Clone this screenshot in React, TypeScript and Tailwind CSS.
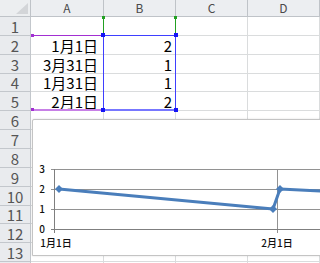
import React from "react";

const rowHeights = [19, 19, 19, 18, 19, 19, 19, 19, 19, 19, 18, 19, 19, 19];
const cols = ["A", "B", "C", "D", ""];
const colW = ["w-[73px]", "w-[72px]", "w-[72px]", "w-[72px]", "w-[72px]"];
const rowH: Record<number, string> = { 18: "h-[18px]", 19: "h-[19px]" };

const dataA: Record<number, string> = { 2: "1月1日", 3: "3月31日", 4: "1月31日", 5: "2月1日" };
const dataB: Record<number, string> = { 2: "2", 3: "1", 4: "1", 5: "2" };

function Diamond({ x, y }: { x: number; y: number }) {
  const s = 4;
  return <polygon points={`${x},${y - s} ${x + s},${y} ${x},${y + s} ${x - s},${y}`} fill="#4a7ebb" />;
}

export default function App() {
  const font = "font-['Noto_Sans_CJK_JP',sans-serif]";
  return (
    <div className={`relative w-[320px] h-[263px] overflow-hidden bg-white ${font}`}>
      {/* header row */}
      <div className="flex h-[17px]">
        <div className="relative w-[31px] shrink-0 h-full bg-[#eceef0] border-r border-b border-[#bfc3c8]">
          <svg className="absolute inset-0" width="30" height="16">
            <polygon points="16,14 28,14 28,3" fill="#d3d5d8" />
          </svg>
        </div>
        {cols.map((c, i) => (
          <div
            key={i}
            className={`${colW[i]} shrink-0 h-full bg-[#eceef1] border-r border-b border-[#bfc3c8] flex items-center justify-center text-[12px] leading-none text-[#4a4a4a]`}
          >
            {c}
          </div>
        ))}
      </div>
      {/* body rows */}
      {rowHeights.map((h, idx) => {
        const r = idx + 1;
        return (
          <div key={r} className={`flex ${rowH[h]}`}>
            <div className="w-[31px] shrink-0 h-full bg-[#e9ebee] border-r border-b border-[#c3c7cc] flex items-center justify-center text-[15px] leading-none text-[#555]">
              {r <= 13 ? r : ""}
            </div>
            {cols.map((c, i) => (
              <div
                key={i}
                className={`${colW[i]} shrink-0 h-full border-r border-b border-[#dadcdd] flex items-end justify-end pb-px text-[15px] leading-[15px] text-black ${
                  i === 0 ? "pr-[5px]" : "pr-[3px]"
                }`}
              >
                {i === 0 ? dataA[r] ?? "" : i === 1 ? dataB[r] ?? "" : ""}
              </div>
            ))}
          </div>
        );
      })}

      {/* series name highlight (green) */}
      <div className="absolute left-[103px] top-[17px] w-[73px] h-[18px] border-l border-r border-l-[#22a022] border-r-[#22a022]">
        <div className="absolute -left-[2px] -top-px w-[3px] h-[3px] bg-[#22a022]" />
        <div className="absolute -right-[2px] -top-px w-[3px] h-[3px] bg-[#22a022]" />
      </div>

      {/* category highlight (purple) */}
      <div className="absolute left-[31px] top-[35px] w-[72px] h-[76px] border-t border-b-2 border-t-[#a22fd2] border-b-[#c780e6]">
        <div className="absolute left-0 -top-[2px] w-[3px] h-[3px] bg-[#a22fd2]" />
        <div className="absolute left-0 -bottom-[2px] w-[3px] h-[3px] bg-[#a22fd2]" />
      </div>

      {/* values highlight (blue) */}
      <div className="absolute left-[103px] top-[35px] w-[73px] h-[76px] border-l border-r border-t border-b-2 border-l-[#3f3fff] border-r-[#3f3fff] border-t-[#3f3fff] border-b-[#7777ff]">
        <div className="absolute -left-[3px] -top-[3px] w-[4px] h-[4px] bg-[#1515f5]" />
        <div className="absolute -right-[3px] -top-[3px] w-[4px] h-[4px] bg-[#1515f5]" />
        <div className="absolute -left-[3px] -bottom-[3px] w-[4px] h-[4px] bg-[#1515f5]" />
        <div className="absolute -right-[3px] -bottom-[3px] w-[4px] h-[4px] bg-[#1515f5]" />
      </div>

      {/* chart */}
      <div className="absolute left-[32px] top-[119px] w-[300px] h-[137px] bg-white border border-[#c4c4c4] rounded-tl-[2px] shadow-[0_0_2px_rgba(0,0,0,0.15)]">
        <svg className="absolute left-0 top-0" width="298" height="135" viewBox="33 120 298 135">
          <g stroke="#929292" strokeWidth="1" fill="none">
            <line x1="51" y1="169.5" x2="331" y2="169.5" />
            <line x1="51" y1="189.5" x2="331" y2="189.5" />
            <line x1="51" y1="209.5" x2="331" y2="209.5" />
            <line x1="277.5" y1="169" x2="277.5" y2="233" />
          </g>
          <g stroke="#7f7f7f" strokeWidth="1" fill="none">
            <line x1="51" y1="229.5" x2="331" y2="229.5" />
            <line x1="54.5" y1="169" x2="54.5" y2="233" />
          </g>
          <g fontFamily="'Noto Sans CJK JP', sans-serif" fontSize="10" fontWeight="500" fill="#111" textAnchor="middle">
            <text x="42" y="173">3</text>
            <text x="42" y="193">2</text>
            <text x="42" y="213">1</text>
            <text x="42" y="233">0</text>
            <text x="56" y="247">1月1日</text>
            <text x="277" y="247">2月1日</text>
          </g>
          <polyline
            points="59,189 273,209 280,189 700,209"
            fill="none"
            stroke="#4a7ebb"
            strokeWidth="3"
            strokeLinejoin="round"
          />
          <Diamond x={59} y={189} />
          <Diamond x={273} y={209} />
          <Diamond x={280} y={189} />
        </svg>
      </div>
    </div>
  );
}
